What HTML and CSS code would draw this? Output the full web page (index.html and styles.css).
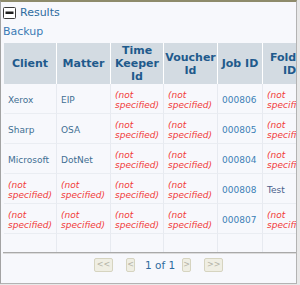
FILE: index.html
```html
<!DOCTYPE html>
<html>
<head>
<meta charset="utf-8">
<link rel="stylesheet" href="styles.css">
</head>
<body>
<div class="panel">
  <div class="title">
    <svg class="toggle" width="13" height="12" viewBox="0 0 13 12"><rect x="0.5" y="0.5" width="12" height="11" rx="1" fill="#fff" stroke="#3a3a3a"/><rect x="2.5" y="4.5" width="8" height="2.5" fill="#1e1e1e"/></svg>
    <span class="title-text">Results</span>
  </div>
  <div class="sub">Backup</div>
  <div class="table-wrap">
    <div class="grid">
      <div class="th">Client</div>
      <div class="th">Matter</div>
      <div class="th">Time Keeper Id</div>
      <div class="th">Voucher Id</div>
      <div class="th">Job ID</div>
      <div class="th">Folder ID</div>

      <div class="td name">Xerox</div>
      <div class="td name">EIP</div>
      <div class="td ns">(not specified)</div>
      <div class="td ns">(not specified)</div>
      <div class="td num">000806</div>
      <div class="td ns">(not specified)</div>

      <div class="td name">Sharp</div>
      <div class="td name">OSA</div>
      <div class="td ns">(not specified)</div>
      <div class="td ns">(not specified)</div>
      <div class="td num">000805</div>
      <div class="td ns">(not specified)</div>

      <div class="td name">Microsoft</div>
      <div class="td name">DotNet</div>
      <div class="td ns">(not specified)</div>
      <div class="td ns">(not specified)</div>
      <div class="td num">000804</div>
      <div class="td ns">(not specified)</div>

      <div class="td ns">(not specified)</div>
      <div class="td ns">(not specified)</div>
      <div class="td ns">(not specified)</div>
      <div class="td ns">(not specified)</div>
      <div class="td num">000808</div>
      <div class="td folder">Test</div>

      <div class="td ns">(not specified)</div>
      <div class="td ns">(not specified)</div>
      <div class="td ns">(not specified)</div>
      <div class="td ns">(not specified)</div>
      <div class="td num">000807</div>
      <div class="td ns">(not specified)</div>

      <div class="fill"></div>
      <div class="fill"></div>
      <div class="fill"></div>
      <div class="fill"></div>
      <div class="fill"></div>
      <div class="fill"></div>
    </div>
  </div>
  <div class="pager">
    <span class="btn dbl first">&lt;&lt;</span>
    <span class="btn sgl prev">&lt;</span>
    <span class="pages">1 of 1</span>
    <span class="btn sgl next">&gt;</span>
    <span class="btn dbl last">&gt;&gt;</span>
  </div>
</div>
</body>
</html>
```
FILE: styles.css
```css
html, body {
  margin: 0;
  padding: 0;
}
body {
  background: #e8e8e8;
  font-family: "DejaVu Sans", Verdana, sans-serif;
  width: 300px;
  height: 285px;
  overflow: hidden;
}
.panel {
  box-sizing: border-box;
  width: 297px;
  height: 284px;
  background: #f7f8fc;
  border-top: 2px solid #8e8b6b;
  border-left: 1px solid #a3a3a3;
  border-right: 1px solid #b3b3b3;
  border-bottom: 1px solid #b3b3b3;
  display: flex;
  flex-direction: column;
}
.title {
  display: flex;
  align-items: center;
  height: 14px;
  margin-top: 4px;
  padding-left: 2px;
  gap: 4px;
}
.toggle {
  display: block;
}
.title-text {
  font-size: 11px;
  line-height: 14px;
  color: #2e6b9e;
}
.sub {
  font-size: 11px;
  line-height: 14px;
  color: #3a7ab4;
  margin-top: 5px;
  padding-left: 2px;
}
.table-wrap {
  margin-top: 4px;
  margin-left: 3px;
  height: 209px;
  overflow: hidden;
}
.grid {
  display: grid;
  grid-template-columns: 53px 54px 53px 54px 45px 54px;
  grid-template-rows: 41px repeat(5, 30px) 18px;
  width: 313px;
}
.th {
  box-sizing: border-box;
  background: #d3dbe2;
  border-right: 1px solid #ffffff;
  color: #1f5a8c;
  font-weight: bold;
  font-size: 11px;
  line-height: 13px;
  display: flex;
  align-items: center;
  justify-content: center;
  text-align: center;
  padding: 0 3px;
}
.td, .fill {
  box-sizing: border-box;
  border-right: 1px solid #e7eaf0;
  border-bottom: 1px solid #eaedf2;
  font-size: 9px;
  line-height: 10px;
  display: flex;
  align-items: center;
  padding: 2px 4px 0 4px;
}
.fill {
  border-bottom: none;
}
.name {
  color: #3f6f93;
}
.num {
  color: #3c80b6;
}
.folder {
  color: #4b5f8c;
}
.ns {
  color: #f23a3a;
  font-style: italic;
}
.pager {
  margin-left: 2px;
  border-top: 1px solid #a9a9a9;
  box-shadow: inset 0 1px 0 #dcdcdc;
  flex: 1;
  display: flex;
  align-items: flex-start;
  padding-top: 5px;
  padding-left: 91px;
}
.btn {
  box-sizing: border-box;
  height: 14px;
  background: #efeee3;
  border: 1px solid #d6d4c0;
  border-radius: 2px;
  color: #b3b2a6;
  font-size: 8px;
  line-height: 12px;
  text-align: center;
}
.dbl {
  width: 19px;
}
.sgl {
  width: 9px;
}
.first {
  margin-right: 13px;
}
.prev {
  margin-right: 10px;
}
.pages {
  font-size: 10.5px;
  line-height: 14px;
  color: #2e6b9e;
  margin-right: 7px;
}
.next {
  margin-right: 13px;
}
```
